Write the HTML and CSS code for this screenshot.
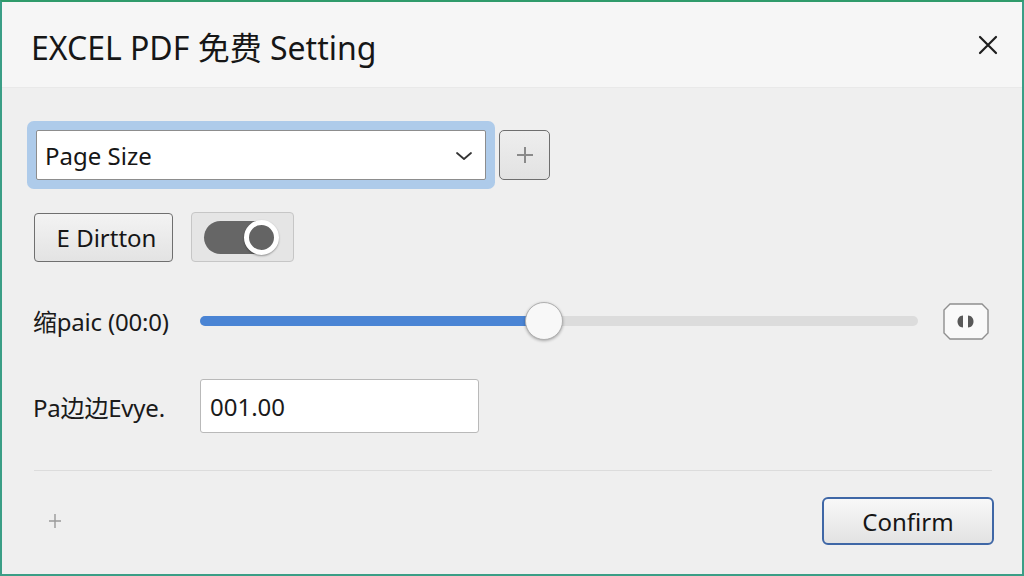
FILE: index.html
```html
<!DOCTYPE html>
<html lang="zh-CN">
<head>
<meta charset="utf-8">
<title>EXCEL PDF 免费 Setting</title>
<link rel="stylesheet" href="styles.css">
</head>
<body>
<div class="window">
  <header class="header">
    <h1 class="title">EXCEL PDF 免费 Setting</h1>
    <button class="close" aria-label="Close">
      <svg width="20" height="20" viewBox="0 0 20 20"><path d="M2 2 L18 18 M18 2 L2 18" stroke="#1e1e1e" stroke-width="2.2" stroke-linecap="round" fill="none"/></svg>
    </button>
  </header>

  <main class="content">
    <div class="row row-select">
      <div class="select">
        <span class="select-text">Page Size</span>
        <svg class="chevron" width="18" height="10" viewBox="0 0 18 10"><path d="M2 2 L9 8 L16 2" stroke="#333" stroke-width="1.8" fill="none" stroke-linecap="round" stroke-linejoin="round"/></svg>
      </div>
      <button class="add-btn" aria-label="Add">
        <svg width="20" height="20" viewBox="0 0 20 20"><path d="M10 2 V18 M2 10 H18" stroke="#8a8a8a" stroke-width="2" fill="none"/></svg>
      </button>
    </div>

    <div class="row row-toggle">
      <button class="btn">E Dirtton</button>
      <div class="toggle-box">
        <div class="toggle-track">
          <span class="toggle-knob"></span>
        </div>
      </div>
    </div>

    <div class="row row-slider">
      <label class="label">缩paic (00:0)</label>
      <div class="slider">
        <div class="slider-fill" style="width: 344px"></div>
        <span class="slider-thumb" style="left: 344px"></span>
      </div>
      <button class="pause-btn" aria-label="Pause">
        <svg width="46" height="37" viewBox="0 0 46 37">
          <path d="M7 1 H39 L45 7 V30 L39 36 H7 L1 30 V7 Z" fill="#f9f9f9" stroke="#8f8f8f" stroke-width="1.4"/>
          <path d="M20 12.5 C16.5 12.5 14.5 15.5 14.5 18.5 C14.5 21.5 16.5 24.5 20 24.5 Z" fill="#585858"/>
          <path d="M25 12.5 C28.5 12.5 30.5 15.5 30.5 18.5 C30.5 21.5 28.5 24.5 25 24.5 Z" fill="#585858"/>
        </svg>
      </button>
    </div>

    <div class="row row-input">
      <label class="label">Pa边边Evye.</label>
      <input class="text-input" type="text" value="001.00">
    </div>

    <hr class="divider">

    <footer class="footer">
      <span class="footer-add">
        <svg width="12" height="14" viewBox="0 0 12 14"><path d="M6 0 V14 M0 7 H12" stroke="#9a9a9a" stroke-width="1.4" fill="none"/></svg>
      </span>
      <button class="confirm">Confirm</button>
    </footer>
  </main>
</div>
</body>
</html>
```

FILE: styles.css
```css
* {
  box-sizing: border-box;
}

html, body {
  margin: 0;
  padding: 0;
}

body {
  width: 1024px;
  height: 576px;
  overflow: hidden;
  font-family: "Noto Sans", "Noto Sans CJK SC", sans-serif;
  color: #1a1a1a;
  background: #efefef;
}

.window {
  width: 1024px;
  height: 576px;
  display: flex;
  flex-direction: column;
  border: 2px solid #3a9e86;
  border-top-color: #2f9b6b;
  background: #efefef;
}

/* title bar */
.header {
  height: 86px;
  flex: none;
  display: flex;
  align-items: center;
  justify-content: space-between;
  padding: 0 24px 0 29px;
  background: #f6f6f6;
  border-bottom: 1px solid #e9e9e9;
}

.title {
  margin: 0;
  font-size: 32px;
  font-weight: 400;
  color: #161616;
  padding-top: 2px;
}

.close {
  border: 0;
  background: transparent;
  padding: 0;
  width: 20px;
  height: 20px;
  display: flex;
}

/* dialog body */
.content {
  flex: 1;
  display: flex;
  flex-direction: column;
  padding: 42px 28px 0 30px;
}

.row {
  display: flex;
  align-items: center;
}

.row-select {
  padding-left: 4px;
}

.select {
  width: 450px;
  height: 50px;
  display: flex;
  align-items: center;
  justify-content: space-between;
  padding: 0 12px 0 8px;
  background: #ffffff;
  border: 1px solid #8d8d8d;
  border-radius: 2px;
  box-shadow: 0 0 0 9px #aecbea;
}

.select-text {
  font-size: 24px;
  color: #161616;
}

.chevron {
  margin-top: 2px;
}

.add-btn {
  margin-left: 13px;
  width: 51px;
  height: 50px;
  display: flex;
  align-items: center;
  justify-content: center;
  background: linear-gradient(#eeeeee, #e2e2e2);
  border: 1px solid #6e6e6e;
  border-radius: 5px;
  padding: 0;
}

.row-toggle {
  margin-top: 32px;
  padding-left: 2px;
}

.btn {
  width: 139px;
  height: 49px;
  font-family: inherit;
  font-size: 24px;
  color: #161616;
  background: linear-gradient(#f3f3f3, #e3e3e3);
  border: 1px solid #6f6f6f;
  border-radius: 4px;
  padding: 0 0 0 6px;
}

.toggle-box {
  margin-left: 18px;
  width: 103px;
  height: 50px;
  display: flex;
  align-items: center;
  padding-left: 12px;
  background: #e5e5e5;
  border: 1px solid #c6c6c6;
  border-radius: 4px;
}

.toggle-track {
  position: relative;
  width: 74px;
  height: 33px;
  border-radius: 17px;
  background: #666666;
}

.toggle-knob {
  position: absolute;
  left: 40px;
  top: -1px;
  width: 35px;
  height: 35px;
  border-radius: 50%;
  background: #646464;
  border: 5px solid #ffffff;
  box-shadow: 0 1px 2px rgba(0, 0, 0, 0.35);
}

.row-slider {
  margin-top: 38px;
  height: 40px;
}

.label {
  width: 168px;
  padding-left: 1px;
  font-size: 24px;
  letter-spacing: -0.2px;
  color: #1a1a1a;
  flex: none;
  white-space: nowrap;
}

.slider {
  position: relative;
  width: 718px;
  height: 10px;
  border-radius: 5px;
  background: #dcdcdc;
  margin-top: 2px;
}

.slider-fill {
  height: 100%;
  border-radius: 5px;
  background: #4a84d4;
}

.slider-thumb {
  position: absolute;
  top: 50%;
  width: 38px;
  height: 38px;
  margin: -19px 0 0 -19px;
  border-radius: 50%;
  background: #f8f8f8;
  border: 1px solid #b0b0b0;
  box-shadow: 0 1px 3px rgba(0, 0, 0, 0.3);
}

.pause-btn {
  margin-left: 25px;
  padding: 0;
  border: 0;
  background: transparent;
  display: flex;
  margin-top: 2px;
}

.row-input {
  margin-top: 39px;
}

.text-input {
  width: 279px;
  height: 54px;
  font-family: inherit;
  font-size: 24px;
  color: #1a1a1a;
  padding: 0 9px;
  background: #ffffff;
  border: 1px solid #b9b9b9;
  border-radius: 3px;
  outline: none;
}

.divider {
  margin: 37px 2px 0 2px;
  border: 0;
  border-top: 1px solid #dcdcdc;
}

.footer {
  display: flex;
  align-items: center;
  justify-content: space-between;
  margin-top: 26px;
}

.footer-add {
  display: flex;
  margin-left: 17px;
}

.confirm {
  width: 172px;
  height: 48px;
  font-family: inherit;
  font-size: 24px;
  color: #161616;
  background: linear-gradient(#f8f8f8, #e2e2e2);
  border: 2px solid #3f67a6;
  border-radius: 6px;
  padding: 0;
}
```
